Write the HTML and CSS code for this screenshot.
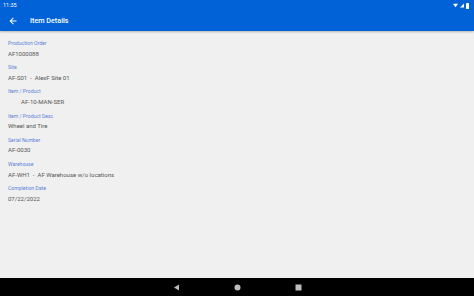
FILE: index.html
```html
<!DOCTYPE html>
<html>
<head>
<meta charset="utf-8">
<link rel="stylesheet" href="styles.css">
</head>
<body>
<div class="screen">
  <div class="status">
    <span class="time">11:35</span>
    <span class="sicons">
      <svg class="ic" width="5" height="5" viewBox="0 0 6 5"><path d="M0 0.5 L6 0.5 L3 4.5 Z" fill="#fff"/></svg>
      <svg class="ic" width="4" height="5" viewBox="0 0 5 5"><path d="M0 5 L5 0 L5 5 Z" fill="#fff"/></svg>
      <svg class="ic" width="3" height="6" viewBox="0 0 3 6"><rect x="0" y="0" width="3" height="6" rx="0.4" fill="#fff"/></svg>
    </span>
  </div>
  <div class="appbar">
    <svg class="back" width="8" height="8" viewBox="0 0 16 16"><path d="M15 7H4.8l4.7-4.7L8 1 1 8l7 7 1.5-1.3L4.8 9H15z" fill="#fff"/></svg>
    <span class="title">Item Details</span>
  </div>
  <div class="content">
    <div class="field"><div class="label">Production Order</div><div class="value">AF1000088</div></div>
    <div class="field"><div class="label">Site</div><div class="value">AF-S01&nbsp; - &nbsp;AlexF Site 01</div></div>
    <div class="field"><div class="label">Item / Product</div><div class="value indent">AF-10-MAN-SER</div></div>
    <div class="field"><div class="label">Item / Product Desc</div><div class="value">Wheel and Tire</div></div>
    <div class="field"><div class="label">Serial Number</div><div class="value">AF-0030</div></div>
    <div class="field"><div class="label">Warehouse</div><div class="value">AF-WH1&nbsp; - &nbsp;AF Warehouse w/o locations</div></div>
    <div class="field"><div class="label">Completion Date</div><div class="value">07/22/2022</div></div>
  </div>
  <div class="navbar">
    <svg width="7" height="7" viewBox="0 0 7 7"><path d="M6 0.5 L6 6.5 L1 3.5 Z" fill="#bdbdbd"/></svg>
    <svg width="7" height="7" viewBox="0 0 7 7"><circle cx="3.5" cy="3.5" r="3" fill="#bdbdbd"/></svg>
    <svg width="7" height="7" viewBox="0 0 7 7"><rect x="0.5" y="0.5" width="6" height="6" fill="#bdbdbd"/></svg>
  </div>
</div>
</body>
</html>
```
FILE: styles.css
```css
* { box-sizing: border-box; }
html, body { margin: 0; padding: 0; }
body { width: 474px; height: 296px; overflow: hidden; font-family: Roboto, "Liberation Sans", sans-serif; background: #f0f0f0; }
.screen { display: flex; flex-direction: column; height: 296px; }
.status { height: 10px; background: #0062d6; display: flex; align-items: center; justify-content: space-between; padding: 1px 5px 0 3px; }
.time { color: #fff; font-size: 5.5px; line-height: 9px; }
.sicons { display: flex; gap: 2px; align-items: center; }
.ic { display: block; flex: none; }
.appbar { height: 21px; background: #0062d6; display: flex; align-items: center; padding-left: 9px; box-shadow: 0 1px 2px rgba(0,0,0,0.25); position: relative; }
.back { margin-right: 13px; }
.title { color: #fff; font-size: 7.2px; font-weight: 500; }
.content { flex: 1; padding: 9px 8px 0 8px; display: flex; flex-direction: column; gap: 6.6px; }
.field { display: flex; flex-direction: column; gap: 1.6px; }
.label { color: #5b82d8; font-size: 5.1px; line-height: 7px; }
.value { color: #555; font-size: 6px; line-height: 9px; }
.indent { padding-left: 13px; }
.navbar { height: 18px; background: #000; display: flex; justify-content: center; align-items: center; gap: 54px; }
```
